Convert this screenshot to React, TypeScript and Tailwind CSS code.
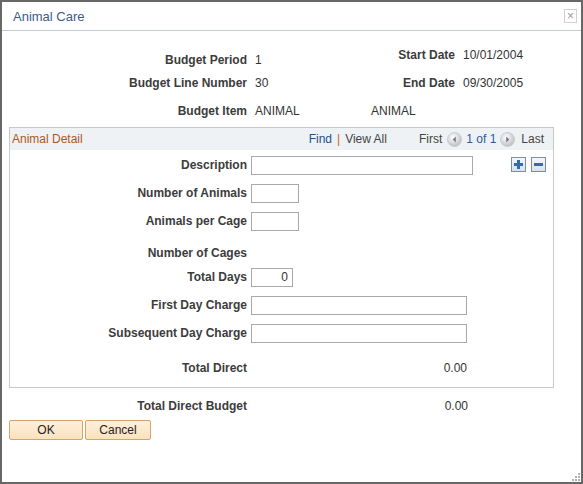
import React from 'react';

const font = { fontFamily: '"Liberation Sans", Arial, sans-serif' };

function NavArrow({ dir }: { dir: 'left' | 'right' }) {
  return (
    <svg width="15" height="15" viewBox="0 0 15 15" className="mx-[4px]">
      <defs>
        <radialGradient id={`g-${dir}`} cx="0.4" cy="0.35" r="0.7">
          <stop offset="0" stopColor="#ffffff" />
          <stop offset="1" stopColor="#b9bcbf" />
        </radialGradient>
      </defs>
      <circle cx="7.5" cy="7.5" r="7" fill={`url(#g-${dir})`} stroke="#c4c6c8" strokeWidth="0.8" />
      {dir === 'left' ? (
        <polygon points="8.8,4.5 8.8,10.5 5.6,7.5" fill="#7a7d80" />
      ) : (
        <polygon points="6.2,4.5 6.2,10.5 9.4,7.5" fill="#7a7d80" />
      )}
    </svg>
  );
}

function RowButton({ kind }: { kind: 'plus' | 'minus' }) {
  return (
    <div className="w-[15px] h-[15px] border border-[#7f8d9c] bg-gradient-to-b from-[#f4f7fa] to-[#d9e1e9] flex items-center justify-center">
      <svg width="11" height="11" viewBox="0 0 11 11">
        <rect x="1" y="4" width="9" height="3" fill="#2f6db3" />
        {kind === 'plus' && <rect x="4" y="1" width="3" height="9" fill="#2f6db3" />}
      </svg>
    </div>
  );
}

function Field({ label, children, mt }: { label: string; children?: React.ReactNode; mt: string }) {
  return (
    <div className={`flex items-center h-[18px] ${mt}`}>
      <div className="w-[237px] text-right font-bold text-[#3c3c3c]">{label}</div>
      <div className="ml-[4px] flex items-center">{children}</div>
    </div>
  );
}

function Input({ w, value }: { w: string; value?: string }) {
  return (
    <div className={`${w} h-[19px] border border-[#a9a9a9] bg-white text-right pr-[4px] leading-[17px] text-[#333]`}>
      {value}
    </div>
  );
}

export default function App() {
  return (
    <div style={font} className="w-[583px] h-[484px] border-2 border-[#676767] bg-white text-[12px] text-[#333] flex flex-col relative overflow-hidden">
      {/* Title bar */}
      <div className="h-[29px] border-b border-[#c3cbd2] flex items-center pl-[11px] pr-[4px] shrink-0">
        <span className="text-[13px] text-[#3b5b8b] mt-[1px]">Animal Care</span>
        <div className="ml-auto w-[13px] h-[14px] border border-[#d2d2d2] flex items-center justify-center text-[12px] leading-none text-[#9a9a9a]">
          ×
        </div>
      </div>

      {/* Header info */}
      <div className="flex">
        <div className="w-[378px] pt-[21px]">
          <div className="flex h-4 leading-4">
            <div className="w-[245px] text-right font-bold text-[#3c3c3c]">Budget Period</div>
            <div className="ml-[8px]">1</div>
          </div>
          <div className="flex h-4 leading-4 mt-[7px]">
            <div className="w-[245px] text-right font-bold text-[#3c3c3c]">Budget Line Number</div>
            <div className="ml-[8px]">30</div>
          </div>
        </div>
        <div className="pt-[16px]">
          <div className="flex h-4 leading-4">
            <div className="w-[75px] text-right font-bold text-[#3c3c3c]">Start Date</div>
            <div className="ml-[8px]">10/01/2004</div>
          </div>
          <div className="flex h-4 leading-4 mt-[12px]">
            <div className="w-[75px] text-right font-bold text-[#3c3c3c]">End Date</div>
            <div className="ml-[8px]">09/30/2005</div>
          </div>
        </div>
      </div>
      <div className="flex h-4 leading-4 mt-[12px]">
        <div className="w-[245px] text-right font-bold text-[#3c3c3c]">Budget Item</div>
        <div className="ml-[8px] w-[116px]">ANIMAL</div>
        <div>ANIMAL</div>
      </div>

      {/* Animal Detail group */}
      <div className="ml-[7px] mt-[8px] w-[545px] border border-[#c9c9c9] pb-[10px]">
        <div className="h-[22px] bg-[#eef2f4] flex items-center pl-[2px] pr-[9px]">
          <span className="text-[#b0561b]">Animal Detail</span>
          <div className="ml-auto flex items-center">
            <span className="text-[#1f4f8f]">Find</span>
            <span className="text-[#c06a20] mx-[5px]">|</span>
            <span className="text-[#444]">View All</span>
            <span className="text-[#444] ml-[32px]">First</span>
            <span className="ml-[1px] flex"><NavArrow dir="left" /></span>
            <span className="text-[#2c5c9c]">1 of 1</span>
            <span className="flex"><NavArrow dir="right" /></span>
            <span className="text-[#444] ml-[2px]">Last</span>
          </div>
        </div>

        <Field label="Description" mt="mt-[6px]">
          <Input w="w-[222px]" />
          <div className="ml-[38px] flex gap-[5px] -mt-[2px]">
            <RowButton kind="plus" />
            <RowButton kind="minus" />
          </div>
        </Field>
        <Field label="Number of Animals" mt="mt-[10px]">
          <Input w="w-[48px]" />
        </Field>
        <Field label="Animals per Cage" mt="mt-[10px]">
          <Input w="w-[48px]" />
        </Field>
        <Field label="Number of Cages" mt="mt-[14px]" />
        <Field label="Total Days" mt="mt-[6px]">
          <Input w="w-[42px]" value="0" />
        </Field>
        <Field label="First Day Charge" mt="mt-[10px]">
          <Input w="w-[216px]" />
        </Field>
        <Field label="Subsequent Day Charge" mt="mt-[10px]">
          <Input w="w-[216px]" />
        </Field>
        <Field label="Total Direct" mt="mt-[17px]">
          <div className="w-[216px] text-right">0.00</div>
        </Field>
      </div>

      {/* Total Direct Budget */}
      <div className="flex items-center h-[18px] mt-[9px]">
        <div className="w-[245px] text-right font-bold text-[#3c3c3c]">Total Direct Budget</div>
        <div className="ml-[4px] w-[217px] text-right">0.00</div>
      </div>

      {/* Buttons */}
      <div className="flex ml-[7px] mt-[5px] gap-[2px]">
        <button className="w-[74px] h-[20px] rounded-[2px] border border-[#d5a468] bg-gradient-to-b from-[#fdf0dc] to-[#fbe2bd] text-[12px] text-[#222]">
          OK
        </button>
        <button className="w-[66px] h-[20px] rounded-[2px] border border-[#d5a468] bg-gradient-to-b from-[#fdf0dc] to-[#fbe2bd] text-[12px] text-[#222]">
          Cancel
        </button>
      </div>

      {/* resize grip */}
      <svg width="10" height="10" viewBox="0 0 10 10" className="absolute right-[1px] bottom-[1px]">
        <rect x="8" y="2" width="2" height="2" fill="#b0b0b0" />
        <rect x="5" y="5" width="2" height="2" fill="#b0b0b0" />
        <rect x="8" y="5" width="2" height="2" fill="#b0b0b0" />
        <rect x="2" y="8" width="2" height="2" fill="#b0b0b0" />
        <rect x="5" y="8" width="2" height="2" fill="#b0b0b0" />
        <rect x="8" y="8" width="2" height="2" fill="#b0b0b0" />
      </svg>
    </div>
  );
}
